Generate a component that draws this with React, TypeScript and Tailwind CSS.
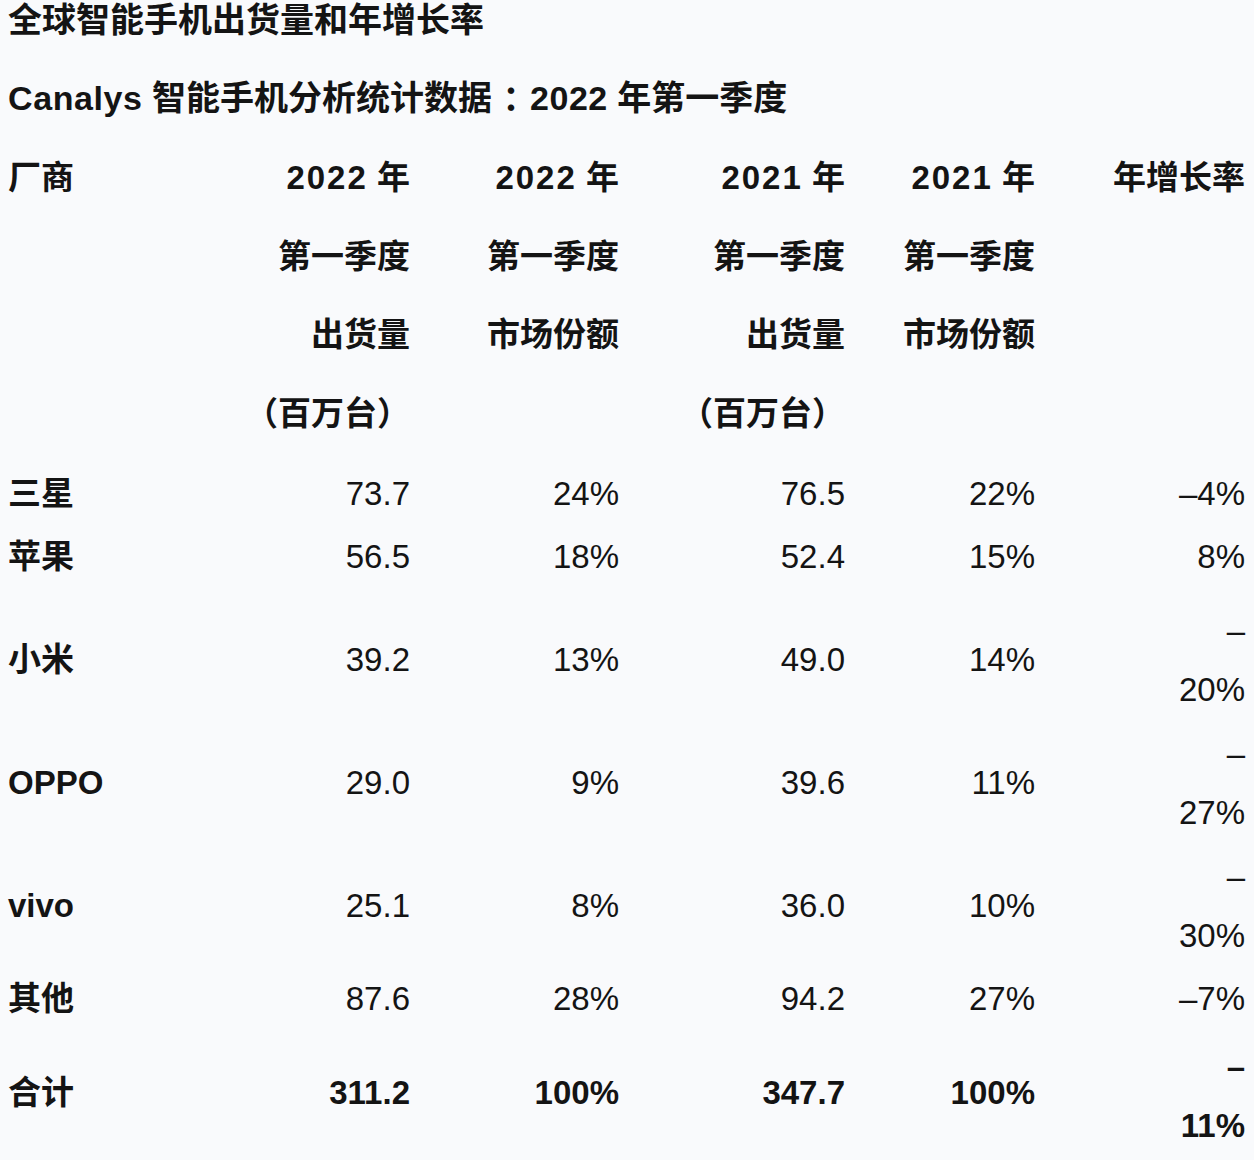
import React from "react";

type Row = {
  name: string;
  v: [string, string, string, string];
  g: string[];
  mt?: string;
  bold?: boolean;
};

const rows: Row[] = [
  { name: "三星", v: ["73.7", "24%", "76.5", "22%"], g: ["–4%"], mt: "mt-[9.5px]" },
  { name: "苹果", v: ["56.5", "18%", "52.4", "15%"], g: ["8%"] },
  { name: "小米", v: ["39.2", "13%", "49.0", "14%"], g: ["–", "20%"], mt: "mt-[10px]" },
  { name: "OPPO", v: ["29.0", "9%", "39.6", "11%"], g: ["–", "27%"] },
  { name: "vivo", v: ["25.1", "8%", "36.0", "10%"], g: ["–", "30%"] },
  { name: "其他", v: ["87.6", "28%", "94.2", "27%"], g: ["–7%"] },
  { name: "合计", v: ["311.2", "100%", "347.7", "100%"], g: ["–", "11%"], bold: true },
];

const cols = "grid grid-cols-[232px_170px_209px_226px_190px_210px]";

function Year({ y }: { y: string }) {
  return (
    <>
      <span className="tracking-[2px]">{y}</span> 年
    </>
  );
}

export default function App() {
  return (
    <div className="min-h-[1160px] w-full bg-[#f9fafc] text-[#141414] font-['Liberation_Sans','Noto_Sans_CJK_SC',sans-serif] pl-[8px]">
      <div className="h-[40px] leading-[40px] text-[34px] font-bold whitespace-nowrap">
        全球智能手机出货量和年增长率
      </div>
      <div className="mt-[19px] h-[78px] flex items-center text-[34px] font-bold whitespace-nowrap leading-[40px]">
        <span className="tracking-[0.6px]">Canalys</span>
        <span>&nbsp;智能手机分析统计数据</span>
        <span className="font-['Noto_Sans_CJK_JP',sans-serif] px-[2px] leading-[40px]">：</span>
        <span className="tracking-[0.5px]">2022</span>
        <span>&nbsp;年第一季度</span>
      </div>

      <div className={`${cols} mt-[2px] text-[33px] font-bold leading-[78.5px] items-start`}>
        <div className="text-left">厂商</div>
        <div className="text-right whitespace-nowrap">
          <Year y="2022" />
          <br />第一季度<br />出货量<br />（百万台）
        </div>
        <div className="text-right whitespace-nowrap">
          <Year y="2022" />
          <br />第一季度<br />市场份额
        </div>
        <div className="text-right whitespace-nowrap">
          <Year y="2021" />
          <br />第一季度<br />出货量<br />（百万台）
        </div>
        <div className="text-right whitespace-nowrap">
          <Year y="2021" />
          <br />第一季度<br />市场份额
        </div>
        <div className="text-right whitespace-nowrap">年增长率</div>
      </div>

      {rows.map((r) => {
        const tall = r.g.length > 1;
        return (
          <div
            key={r.name}
            className={`${cols} ${r.mt ?? ""} ${tall ? "h-[123px]" : "h-[63px]"} items-center text-[33px]`}
          >
            <div className="font-bold text-left leading-[40px]">{r.name}</div>
            {r.v.map((x, i) => (
              <div
                key={i}
                className={`text-right leading-[40px] ${r.bold ? "font-bold" : "font-normal"}`}
              >
                {x}
              </div>
            ))}
            <div
              className={`text-right ${tall ? "leading-[59px]" : "leading-[40px]"} ${r.bold ? "font-bold pt-[6px]" : "font-normal"}`}
            >
              {r.g.map((line, i) => (
                <div key={i}>{line}</div>
              ))}
            </div>
          </div>
        );
      })}
    </div>
  );
}
